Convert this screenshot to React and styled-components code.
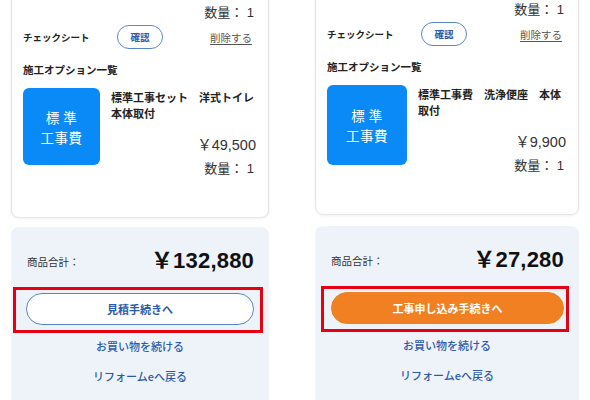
import styled, { createGlobalStyle } from "styled-components";

const GlobalStyle = createGlobalStyle`
  html, body {
    margin: 0;
    padding: 0;
    background: #fff;
    overflow: hidden;
  }
  body {
    font-family: "Noto Sans CJK JP", "Liberation Sans", sans-serif;
    color: #222;
  }
`;

const columns = [
  {
    id: "estimate",
    width: 258,
    marginLeft: 11,
    cardTop: -10,
    boxSize: 77,
    title: "標準工事セット　洋式トイレ\n本体取付",
    price: "￥49,500",
    total: "￥132,880",
    action: "見積手続きへ",
    primary: false,
    panelGap: 9,
    redMargin: "0 6px 0 2px",
    redPad: "3px 6px 5px 10px",
  },
  {
    id: "order",
    width: 264,
    marginLeft: 46,
    cardTop: -13,
    boxSize: 80,
    title: "標準工事費　洗浄便座　本体\n取付",
    price: "￥9,900",
    total: "￥27,280",
    action: "工事申し込み手続きへ",
    primary: true,
    panelGap: 11,
    redMargin: "0 10px 0 6px",
    redPad: "3px 2px 5px 7px",
  },
];

const App = () => {
  return (
    <>
      <GlobalStyle />
      <Page>
        {columns.map((col) => (
          <Column key={col.id} $width={col.width} $left={col.marginLeft}>
            <Card $top={col.cardTop}>
              <Qty>数量：&nbsp;1</Qty>
              <CheckRow>
                <CheckLabel>チェックシート</CheckLabel>
                <ConfirmButton>確認</ConfirmButton>
                <DeleteLink>削除する</DeleteLink>
              </CheckRow>
              <SectionTitle>施工オプション一覧</SectionTitle>
              <ItemRow>
                <OptionBadge $size={col.boxSize}>
                  <span>標 準</span>
                  <span>工事費</span>
                </OptionBadge>
                <ItemInfo>
                  <ItemTitle>{col.title}</ItemTitle>
                  <Price>{col.price}</Price>
                  <ItemQty>数量：&nbsp;1</ItemQty>
                </ItemInfo>
              </ItemRow>
            </Card>

            <Summary $gap={col.panelGap}>
              <TotalRow>
                <TotalLabel>商品合計：</TotalLabel>
                <TotalValue>{col.total}</TotalValue>
              </TotalRow>
              <Highlight $margin={col.redMargin} $pad={col.redPad}>
                <ActionButton $primary={col.primary}>{col.action}</ActionButton>
              </Highlight>
              <TextLink>お買い物を続ける</TextLink>
              <TextLink $space={10}>リフォームeへ戻る</TextLink>
            </Summary>
          </Column>
        ))}
      </Page>
    </>
  );
};

const Page = styled.div`
  width: 590px;
  height: 400px;
  display: flex;
  align-items: flex-start;
  overflow: hidden;
`;

const Column = styled.div`
  width: ${(p) => p.$width}px;
  margin-left: ${(p) => p.$left}px;
  display: flex;
  flex-direction: column;
  flex-shrink: 0;
`;

const Card = styled.div`
  margin-top: ${(p) => p.$top}px;
  padding: 12px 12px 38px 11px;
  background: #fff;
  border: 1px solid #e4e6ea;
  border-radius: 8px;
  box-shadow: 0 1px 3px rgba(0, 0, 0, 0.06);
  display: flex;
  flex-direction: column;
`;

const Qty = styled.div`
  text-align: right;
  font-size: 13px;
  line-height: 20px;
  color: #333;
  font-family: "Liberation Sans", "Noto Sans CJK JP", sans-serif;
  padding-right: 2px;
`;

const ItemQty = styled(Qty)`
  margin-top: 4px;
`;

const CheckRow = styled.div`
  margin-top: 2px;
  height: 24px;
  display: flex;
  align-items: center;
`;

const CheckLabel = styled.span`
  width: 94px;
  font-size: 9.5px;
  font-weight: 700;
  color: #222;
  white-space: nowrap;
`;

const ConfirmButton = styled.button`
  width: 46px;
  height: 24px;
  border: 1px solid #5a86c9;
  border-radius: 12px;
  background: #fff;
  color: #2c5aa8;
  font-family: "Noto Sans CJK JP", sans-serif;
  font-size: 9.5px;
  font-weight: 700;
  padding: 0;
`;

const DeleteLink = styled.span`
  margin-left: auto;
  margin-right: 4px;
  font-size: 10.5px;
  color: #555;
  text-decoration: underline;
  text-underline-offset: 2px;
`;

const SectionTitle = styled.div`
  margin-top: 13px;
  font-size: 10.5px;
  font-weight: 700;
  line-height: 16px;
`;

const ItemRow = styled.div`
  margin-top: 10px;
  display: flex;
  gap: 11px;
`;

const OptionBadge = styled.div`
  width: ${(p) => p.$size}px;
  height: ${(p) => p.$size}px;
  flex-shrink: 0;
  border-radius: 6px;
  background: #0a8af6;
  color: #fff;
  display: flex;
  flex-direction: column;
  align-items: center;
  justify-content: center;
  font-size: 13.5px;
  line-height: 20px;
  letter-spacing: 0.5px;
`;

const ItemInfo = styled.div`
  flex: 1;
  display: flex;
  flex-direction: column;
  padding-top: 1px;
`;

const ItemTitle = styled.div`
  font-size: 11px;
  font-weight: 700;
  line-height: 16px;
  white-space: pre-line;
`;

const Price = styled.div`
  margin-top: 14px;
  text-align: right;
  font-size: 14.5px;
  line-height: 20px;
  color: #333;
  font-family: "Liberation Sans", "Noto Sans CJK JP", sans-serif;
`;

const Summary = styled.div`
  margin-top: ${(p) => p.$gap}px;
  height: 200px;
  background: #eef3fa;
  border-radius: 8px 8px 0 0;
  padding: 16px 0 0;
  display: flex;
  flex-direction: column;
`;

const TotalRow = styled.div`
  height: 30px;
  padding: 0 15px 0 16px;
  display: flex;
  align-items: center;
  justify-content: space-between;
`;

const TotalLabel = styled.span`
  font-size: 10.5px;
  color: #333;
  padding-top: 7px;
`;

const TotalValue = styled.span`
  font-family: "Liberation Sans", "Noto Sans CJK JP", sans-serif;
  font-size: 22px;
  font-weight: 700;
  color: #111;
  letter-spacing: 0.2px;
`;

const Highlight = styled.div`
  margin: ${(p) => p.$margin};
  margin-top: 14px;
  padding: ${(p) => p.$pad};
  border: 3px solid #e60012;
  display: flex;
`;

const ActionButton = styled.button`
  flex: 1;
  height: 32px;
  border-radius: 16px;
  border: 1px solid ${(p) => (p.$primary ? "#f08022" : "#5a86c9")};
  background: ${(p) => (p.$primary ? "#f08022" : "#fff")};
  color: ${(p) => (p.$primary ? "#fff" : "#2c5aa8")};
  font-family: "Noto Sans CJK JP", sans-serif;
  font-size: 11px;
  font-weight: 700;
  padding: 0;
`;

const TextLink = styled.a`
  margin-top: ${(p) => p.$space ?? 3}px;
  text-align: center;
  font-size: 11px;
  line-height: 20px;
  color: #2c5aa8;
  font-weight: 500;
  cursor: pointer;
`;

export default App;
